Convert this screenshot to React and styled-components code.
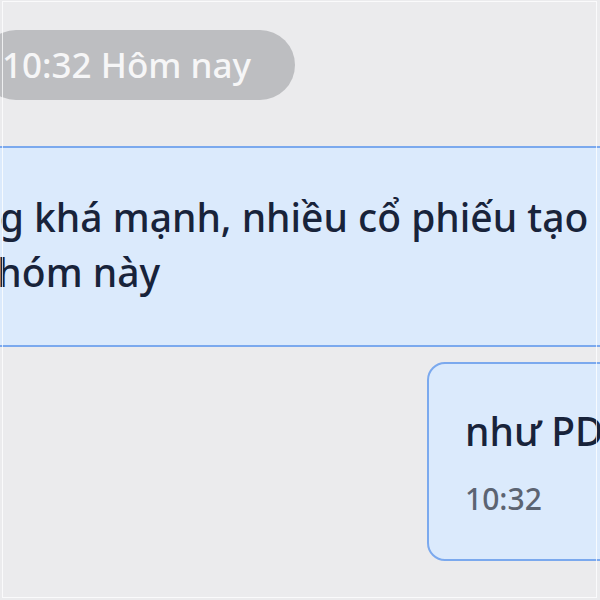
import React from "react";
import styled, { createGlobalStyle } from "styled-components";

const Global = createGlobalStyle`
  html, body { margin: 0; padding: 0; background: #ebebed; }
  body { font-family: "Noto Sans", "Open Sans", sans-serif; }
`;

const Viewport = styled.div`
  position: relative;
  width: 600px;
  height: 600px;
  overflow: hidden;
  background: #ebebed;
`;

const FrameEdge = styled.div`
  position: absolute;
  left: 2px;
  top: 1px;
  width: 593px;
  height: 595px;
  border: 1px solid rgba(255, 255, 255, 0.75);
  pointer-events: none;
`;

const Column = styled.div`
  display: flex;
  flex-direction: column;
  align-items: flex-start;
  width: 820px;
  margin-left: -100px;
  padding-top: 30px;
`;

const TimePill = styled.div`
  margin-left: 81px;
  height: 70px;
  padding: 0 44px 0 21px;
  border-radius: 35px;
  background: #bdbec1;
  color: #f6f6f7;
  font-size: 35px;
  font-weight: 500;
  line-height: 70px;
  white-space: nowrap;
`;

const Bubble = styled.div`
  box-sizing: border-box;
  background: #dbeafc;
  border: 2px solid #7ba9ee;
  border-radius: 18px;
  color: #18233a;
  font-size: 39px;
  font-weight: 500;
  line-height: 55px;
  white-space: nowrap;
  margin-top: ${(p) => p.$gap}px;
  margin-left: ${(p) => p.$indent}px;
  padding: ${(p) => p.$pad};
  width: ${(p) => p.$width}px;
`;

const Line = styled.div``;

const Stamp = styled.div`
  margin-top: 21px;
  font-size: 30px;
  line-height: 40px;
  color: #5c6472;
`;

export default function App() {
  return (
    <>
      <Global />
      <Viewport>
        <Column>
          <TimePill>10:32 Hôm nay</TimePill>
          <Bubble $gap={46} $indent={0} $width={780} $pad="41px 36px 46px 36px">
            <Line>tăng khá mạnh, nhiều cổ phiếu tạo đỉnh mới</Line>
            <Line>ở nhóm này</Line>
          </Bubble>
          <Bubble $gap={15} $indent={527} $width={300} $pad="39px 33px 40px 36px">
            <Line>như PDR, DXG</Line>
            <Stamp>10:32</Stamp>
          </Bubble>
        </Column>
        <FrameEdge />
      </Viewport>
    </>
  );
}
